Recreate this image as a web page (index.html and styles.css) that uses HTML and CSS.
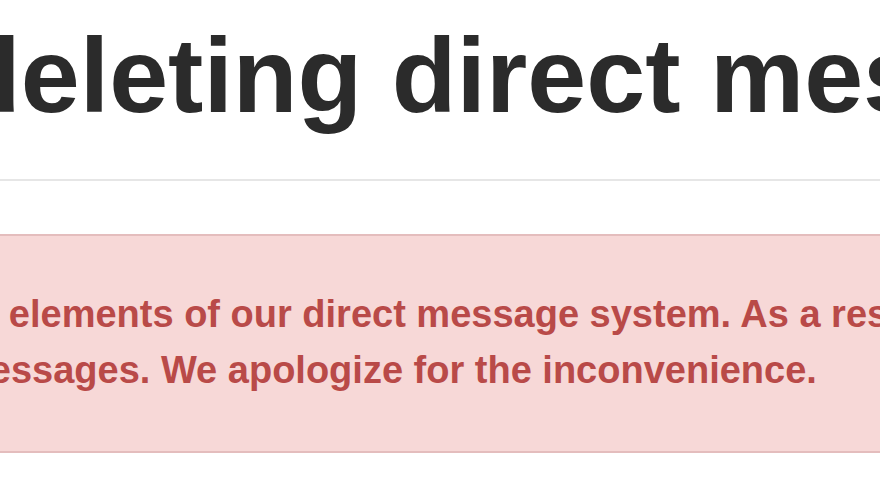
FILE: index.html
```html
<!DOCTYPE html>
<html lang="en">
<head>
<meta charset="utf-8">
<title>Issues deleting direct messages</title>
<link rel="stylesheet" href="styles.css">
</head>
<body>
<div class="page">
  <h1 class="title">deleting direct messages</h1>
  <hr class="rule">
  <div class="alert">
    <p class="alert-text">
      <span class="line line-1">some elements of our direct message system. As a result, you</span>
      <span class="line line-2">messages. We apologize for the inconvenience.</span>
    </p>
  </div>
</div>
</body>
</html>
```
FILE: styles.css
```css
html, body {
  margin: 0;
  padding: 0;
  background: #ffffff;
}
body {
  width: 880px;
  height: 495px;
  overflow: hidden;
  font-family: "Liberation Sans", Arial, Helvetica, sans-serif;
}
.page {
  display: flex;
  flex-direction: column;
}
.title {
  margin: 15px 0 0 -44px;
  font-size: 106px;
  line-height: 120px;
  font-weight: 700;
  color: #2b2b2b;
  white-space: nowrap;
}
.rule {
  margin: 44px 0 0 0;
  border: 0;
  height: 2px;
  background: #e6e6e6;
}
.alert {
  margin: 53px -20px 0 -20px;
  padding: 50px 20px 53px 20px;
  background: #f7d8d7;
  border-top: 2px solid #e4bdbd;
  border-bottom: 2px solid #e4bdbd;
}
.alert-text {
  margin: 0;
  font-size: 38px;
  line-height: 56px;
  font-weight: 700;
  color: #b94a48;
}
.line {
  display: block;
  white-space: nowrap;
}
.line-1 {
  margin-left: -101px;
}
.line-2 {
  margin-left: -44px;
}
```
